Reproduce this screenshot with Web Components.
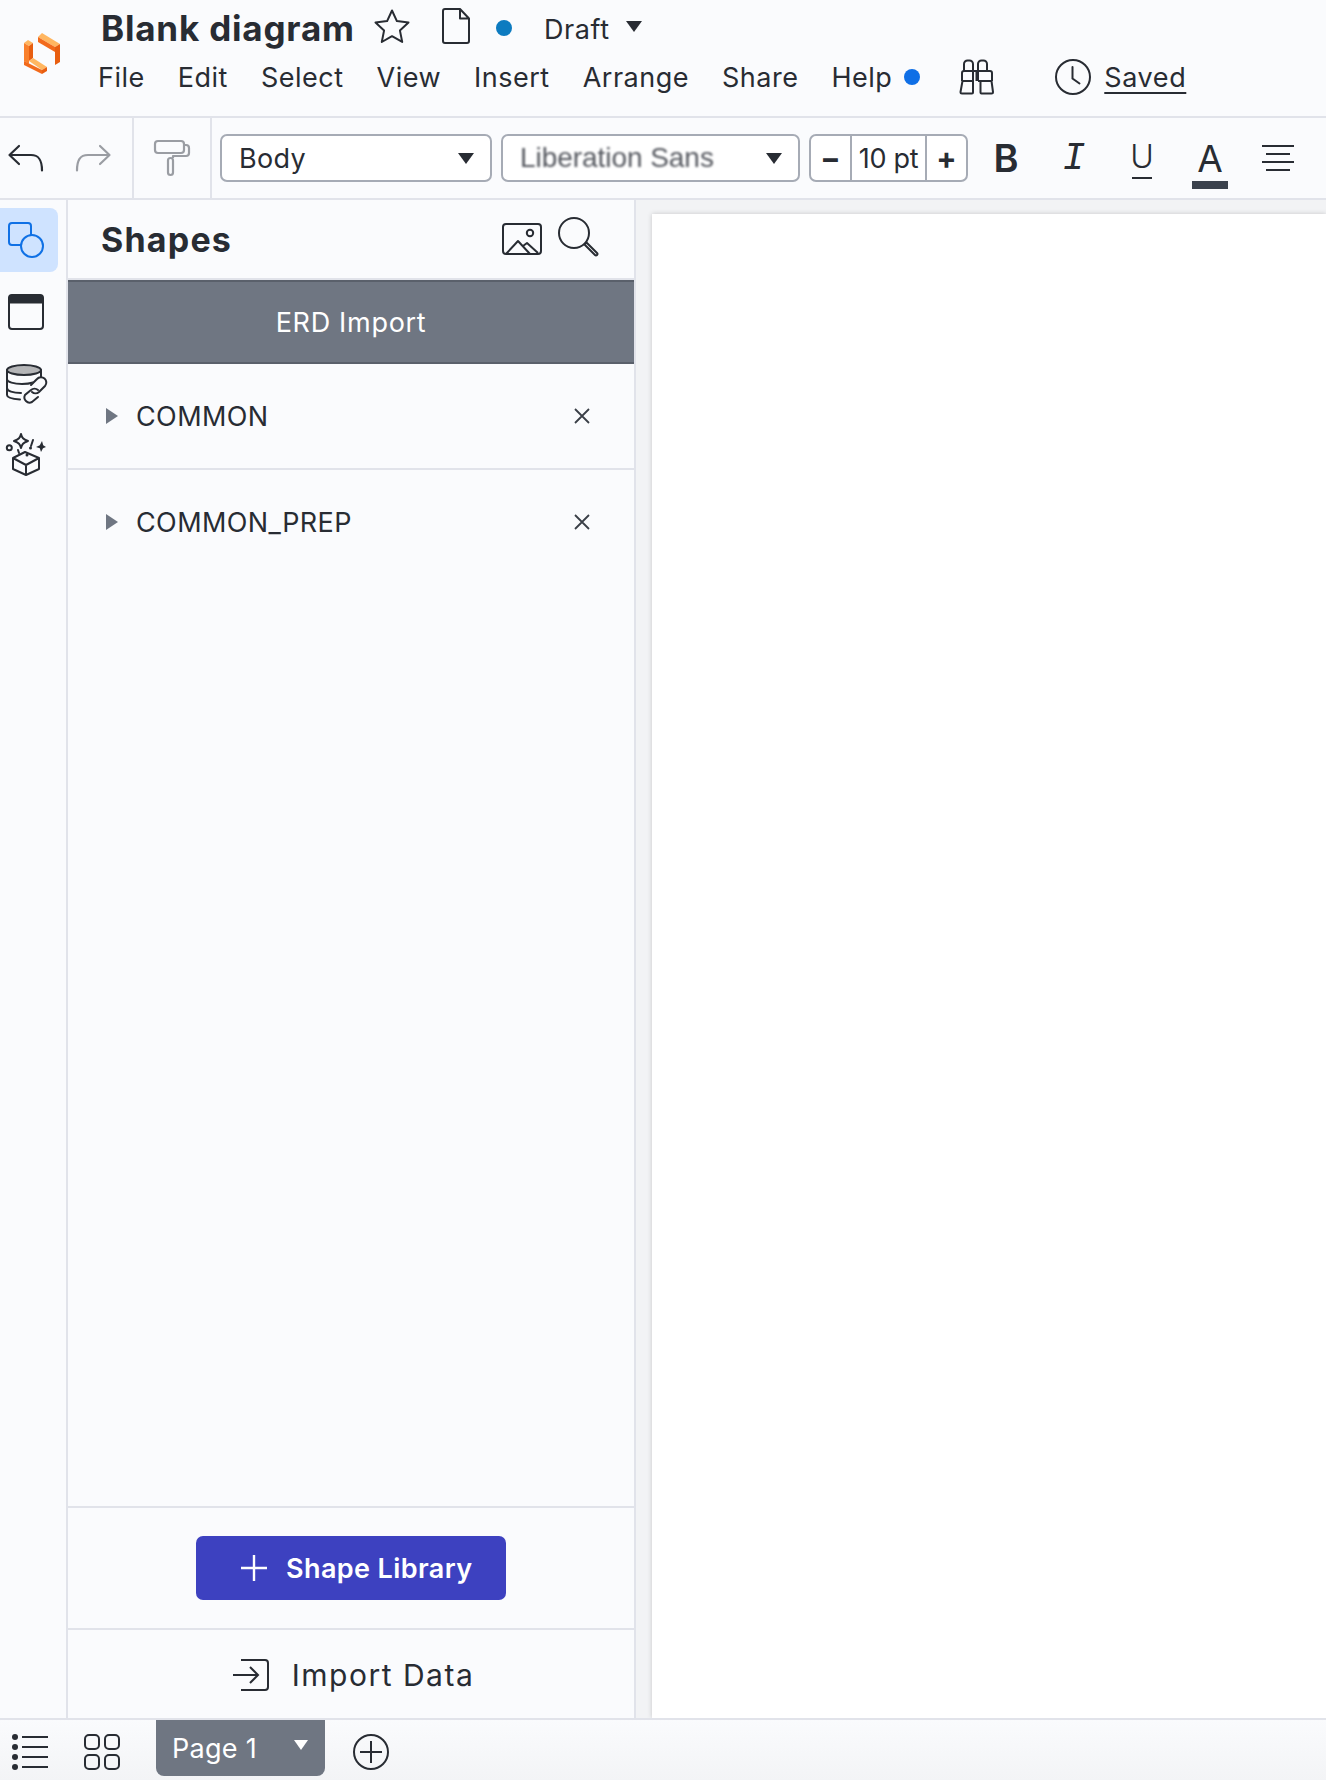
<!DOCTYPE html>
<html lang="en">
<head>
<meta charset="utf-8">
<title>Blank diagram</title>
<style>
  html, body { margin: 0; padding: 0; height: 100%; }
  body {
    display: flex;
    flex-direction: column;
    width: 1326px;
    height: 1780px;
    overflow: hidden;
    background: #fafbfd;
    color: #282c33;
    font-family: Inter, "Noto Sans", sans-serif;
  }
</style>
</head>
<body>
<lc-topbar></lc-topbar>
<lc-toolbar></lc-toolbar>
<lc-workspace>
  <lc-rail slot="rail"></lc-rail>
  <lc-panel slot="panel">
    <lc-library-row name="COMMON"></lc-library-row>
    <lc-library-row name="COMMON_PREP"></lc-library-row>
  </lc-panel>
  <lc-canvas slot="canvas"></lc-canvas>
</lc-workspace>
<lc-pagebar></lc-pagebar>

<script>
const ink = '#282c33';
const grey = '#9a9da3';

// every icon is [width, height, inner svg]
const ICONS = {
  logo: [36, 42, `
    <polygon points="14,5 18,1 36,12 31,15" fill="#ffb660"/>
    <polygon points="14,5 31,15 31,20 14,10" fill="#f26a1b"/>
    <polygon points="31,15 36,12 36,30 31,33" fill="#e85e10"/>
    <polygon points="0,11 4,8 9,11 5,14" fill="#ffb660"/>
    <polygon points="0,11 5,14 5,32 0,29" fill="#f9802c"/>
    <polygon points="5,14 9,11 9,26 5,29" fill="#e85e10"/>
    <polygon points="9,26 23,35 18,38 5,29" fill="#ffb660"/>
    <polygon points="0,29 18,38 18,42 0,33" fill="#f26a1b"/>
    <polygon points="18,38 23,35 23,39 18,42" fill="#e85e10"/>`],
  star: [36, 34, `<path d="M18 1.5l4.9 10.6 11.6 1.4-8.6 7.9 2.3 11.5L18 27.2 7.8 33l2.3-11.6-8.6-7.9 11.6-1.4z" fill="none" stroke="${ink}" stroke-width="2" stroke-linejoin="round"/>`],
  doc: [28, 36, `<path d="M3 1h15l9 9.500v22.500a2 2 0 0 1-2 2H3a2 2 0 0 1-2-2V3a2 2 0 0 1 2-2z M18 1v9.500h9" fill="none" stroke="${ink}" stroke-width="2" stroke-linejoin="round"/>`],
  binoculars: [36, 36, `<g fill="none" stroke="${ink}" stroke-width="2" stroke-linejoin="round">
    <path d="M5 12v-7a3.500 3.500 0 0 1 3.500-3.500h2a3.500 3.500 0 0 1 3.500 3.500v7M19 12v-7a3.500 3.500 0 0 1 3.500-3.500h2a3.500 3.500 0 0 1 3.500 3.500v7"/>
    <path d="M3 22V14a2 2 0 0 1 2-2h26a2 2 0 0 1 2 2v8M17.500 12v10M14 12v10M19 12v10M3 22h11M19 22h14"/>
    <path d="M3.500 22L1.500 33a1.500 1.500 0 0 0 1.500 1.500h10a1 1 0 0 0 1-1V22M21.500 22v11.500a1 1 0 0 0 1 1h10a1.500 1.500 0 0 0 1.500-1.500L32.500 22"/></g>`],
  clock: [36, 36, `<circle cx="18" cy="18" r="17" fill="none" stroke="${ink}" stroke-width="2"/><path d="M17.500 8v11.500l7 5" fill="none" stroke="${ink}" stroke-width="2" stroke-linecap="round"/>`],
  undo: [36, 28, `<path d="M11 2L1.500 11 11 20M2 11h21c8 0 11 5 11 15.500" fill="none" stroke="${ink}" stroke-width="2.200" stroke-linecap="round" stroke-linejoin="round"/>`],
  redo: [36, 28, `<path d="M25 2l9.500 9L25 20M34 11H13C5 11 2 16 2 26.500" fill="none" stroke="${grey}" stroke-width="2.200" stroke-linecap="round" stroke-linejoin="round"/>`],
  roller: [36, 36, `<g fill="none" stroke="${grey}" stroke-width="2.200" stroke-linejoin="round">
    <rect x="1" y="1" width="29" height="12" rx="3"/>
    <path d="M30 5h2a3 3 0 0 1 3 3v5a3 3 0 0 1-3 3H19v2"/>
    <rect x="14" y="18" width="5" height="17" rx="2.500"/></g>`],
  shapes: [36, 36, `<g fill="none" stroke="#1071e5" stroke-width="2">
    <path d="M13 23H4a3 3 0 0 1-3-3V4a3 3 0 0 1 3-3h16a3 3 0 0 1 3 3v9"/>
    <circle cx="24" cy="24" r="11"/></g>`],
  window: [36, 36, `<rect x="1" y="1" width="34" height="34" rx="3" fill="none" stroke="${ink}" stroke-width="2"/><path d="M1 9V4a3 3 0 0 1 3-3h28a3 3 0 0 1 3 3v5z" fill="${ink}" stroke="${ink}"/>`],
  dblink: [42, 40, `<g fill="none" stroke="${ink}" stroke-width="2" stroke-linecap="round">
    <ellipse cx="18" cy="6" rx="17" ry="5" fill="#b4b5b7"/>
    <path d="M1 6v25c0 2.500 6 4 13 4.500M35 6v9M1 15c0 3 7 5 15 5 5 0 8-.500 11-1.500M1 24c0 3 6 5 14 5"/>
    <rect x="14" y="19" width="30" height="14" rx="7" transform="rotate(-45 29 26)" fill="#fafbfd" stroke="none"/>
    <path d="M25 21l6-6a5.200 5.200 0 0 1 8 7l-6 6a5.200 5.200 0 0 1-7 0"/>
    <path d="M32 26a5.200 5.200 0 0 0-7 0l-6 5a5.200 5.200 0 0 0 7 7l6-5"/></g>`],
  gift: [40, 42, `<g fill="none" stroke="${ink}" stroke-width="2" stroke-linejoin="round">
    <path d="M7 24l12-6 14 6-13 7zM7 24v11l13 6 13-6V24M20 31v10"/>
    <circle cx="3.300" cy="13.700" r="2.500"/>
    <path d="M15 0c1 4 2 5 7 7-5 2-6 3-7 7-1-4-2-5-7-7 5-2 6-3 7-7z"/>
    <path d="M27 6l-2 6M12 16l1 3" stroke-linecap="round"/></g>
    <circle cx="24.500" cy="14" r="1.500" fill="${ink}"/>
    <circle cx="21" cy="21" r="1.500" fill="${ink}"/>
    <path d="M36 7l1.200 4.300 2.800 1.700-3 1.300L35 18l-1.200-3.700L30 13l3.800-1.700z" fill="${ink}"/>`],
  image: [40, 32, `<g fill="none" stroke="${ink}" stroke-width="2" stroke-linejoin="round">
    <rect x="1" y="1" width="38" height="30" rx="3"/>
    <circle cx="28" cy="10" r="3.200"/>
    <path d="M4 31l12-13 12 13M21 23l4-3 11 10"/></g>`],
  search: [40, 40, `<circle cx="16" cy="16" r="15" fill="none" stroke="${ink}" stroke-width="2"/>
    <path d="M26.500 27.500l2-2 10.500 10.500a1.400 1.400 0 0 1-2 2z" fill="none" stroke="${ink}" stroke-width="2" stroke-linejoin="round"/>`],
  close: [16, 16, `<path d="M1 1l14 14M15 1L1 15" fill="none" stroke="#3a3f47" stroke-width="1.800"/>`],
  plus: [28, 28, `<path d="M14 1v26M1 14h26" fill="none" stroke="#fff" stroke-width="2.400"/>`],
  importdata: [36, 32, `<path d="M8 1h24a3 3 0 0 1 3 3v24a3 3 0 0 1-3 3H8M0 16h24M17 8l8 8-8 8" fill="none" stroke="${ink}" stroke-width="2"/>`],
  list: [36, 36, `<g fill="${ink}"><circle cx="3" cy="3" r="3"/><circle cx="3" cy="13" r="3"/><circle cx="3" cy="23" r="3"/><circle cx="3" cy="33" r="3"/></g>
    <path d="M10 3h26M10 13h26M10 23h26M10 33h26" stroke="${ink}" stroke-width="2"/>`],
  grid: [36, 36, `<g fill="none" stroke="${ink}" stroke-width="2"><rect x="1" y="1" width="14" height="14" rx="4"/><rect x="21" y="1" width="14" height="14" rx="4"/><rect x="1" y="21" width="14" height="14" rx="4"/><rect x="21" y="21" width="14" height="14" rx="4"/></g>`],
  addpage: [36, 36, `<circle cx="18" cy="18" r="17" fill="none" stroke="${ink}" stroke-width="2"/><path d="M18 7v22M7 18h22" stroke="${ink}" stroke-width="2"/>`]
};

class LcIcon extends HTMLElement {
  constructor() {
    super();
    this.attachShadow({ mode: 'open' });
  }
  connectedCallback() {
    const [w, h, inner] = ICONS[this.getAttribute('name')];
    this.shadowRoot.innerHTML = `
      <style>:host { display: block; flex: none; line-height: 0; } svg { display: block; overflow: visible; }</style>
      <svg width="${w}" height="${h}" viewBox="0 0 ${w} ${h}">${inner}</svg>`;
  }
}
customElements.define('lc-icon', LcIcon);

class LcTopbar extends HTMLElement {
  constructor() {
    super();
    this.attachShadow({ mode: 'open' });
    this.shadowRoot.innerHTML = `
      <style>
        :host { display: flex; flex: none; height: 116px; border-bottom: 2px solid #e1e3ea; }
        .logo { width: 77px; padding: 32px 0 0 24px; flex: none; box-sizing: border-box; }
        .col { display: flex; flex-direction: column; }
        .title-row { display: flex; align-items: center; height: 52px; }
        h1 { margin: 4px 0 0 24px; font-size: 35px; font-weight: 700; letter-spacing: .8px; white-space: nowrap; width: 273px; }
        .doc { margin-left: 32px; }
        .dot { width: 16px; height: 16px; border-radius: 50%; background: #0c7bc0; margin: 4px 0 0 26px; }
        .draft { font-size: 27px; margin: 6px 0 0 32px; letter-spacing: .6px; width: 82px; }
        .caret { width: 0; height: 0; border-left: 8px solid transparent; border-right: 8px solid transparent; border-top: 11px solid ${ink}; margin-top: 0; }
        nav { display: flex; align-items: center; height: 50px; margin-left: 21px; font-size: 27px; letter-spacing: .5px; }
        nav span { margin-right: 33px; }
        nav .help { margin-right: 12px; }
        .blue { width: 16px; height: 16px; border-radius: 50%; background: #0f6fe6; margin-right: 39px; }
        .clock { margin-left: 60px; margin-right: 13px; }
        nav u { text-underline-offset: 5px; text-decoration-thickness: 2px; letter-spacing: .6px; }
      </style>
      <div class="logo"><lc-icon name="logo"></lc-icon></div>
      <div class="col">
        <div class="title-row">
          <h1>Blank diagram</h1>
          <lc-icon name="star"></lc-icon>
          <lc-icon class="doc" name="doc"></lc-icon>
          <div class="dot"></div>
          <div class="draft">Draft</div>
          <div class="caret"></div>
        </div>
        <nav>
          <span>File</span><span>Edit</span><span>Select</span><span>View</span><span>Insert</span><span>Arrange</span><span>Share</span><span class="help">Help</span>
          <div class="blue"></div>
          <lc-icon name="binoculars"></lc-icon>
          <lc-icon class="clock" name="clock"></lc-icon>
          <u>Saved</u>
        </nav>
      </div>`;
  }
}
customElements.define('lc-topbar', LcTopbar);

class LcSelect extends HTMLElement {
  constructor() {
    super();
    this.attachShadow({ mode: 'open' });
    this.shadowRoot.innerHTML = `
      <style>
        :host { display: flex; align-items: center; justify-content: space-between; box-sizing: border-box; height: 48px; padding: 0 16px 0 17px; border: 2px solid #a6abb5; border-radius: 7px; background: #fff; font-size: 27px; letter-spacing: .3px; }
        .caret { width: 0; height: 0; border-left: 8px solid transparent; border-right: 8px solid transparent; border-top: 11px solid ${ink}; }
      </style>
      <slot></slot><div class="caret"></div>`;
  }
}
customElements.define('lc-select', LcSelect);

class LcToolbar extends HTMLElement {
  constructor() {
    super();
    this.attachShadow({ mode: 'open' });
    this.shadowRoot.innerHTML = `
      <style>
        :host { display: flex; align-items: center; flex: none; height: 80px; border-bottom: 2px solid #e1e3ea; box-sizing: content-box; }
        .history { display: flex; align-items: center; gap: 31px; width: 134px; height: 100%; box-sizing: border-box; padding-left: 8px; border-right: 2px solid #e1e3ea; }
        .paint { display: flex; align-items: center; width: 78px; height: 100%; box-sizing: border-box; padding-left: 20px; border-right: 2px solid #e1e3ea; }
        .controls { display: flex; align-items: center; gap: 9px; margin-left: 8px; }
        .body { width: 272px; }
        .font { width: 299px; }
        .blurred { font-family: "Liberation Sans", sans-serif; color: #55585f; filter: blur(.9px); font-size: 28px; letter-spacing: -.05px; }
        .size { display: flex; align-items: stretch; width: 159px; height: 48px; box-sizing: border-box; border: 2px solid #a6abb5; border-radius: 7px; background: #fff; }
        .size div { display: flex; align-items: center; justify-content: center; }
        .step { width: 39px; font-size: 30px; font-weight: 700; }
        .val { flex: 1; border-left: 2px solid #a6abb5; border-right: 2px solid #a6abb5; font-size: 27px; letter-spacing: -.3px; }
        .fmt { display: flex; margin-left: 4px; }
        .fmt > div { position: relative; display: flex; align-items: center; justify-content: center; width: 68px; height: 60px; }
        .b { font-size: 38px; font-weight: 600; }
        .i { font-family: "Liberation Mono", monospace; font-style: italic; font-size: 38px; }
        .u { font-size: 32px; font-weight: 300; padding-bottom: 4px; box-sizing: border-box; }
        .a { font-size: 37px; font-weight: 400; box-sizing: border-box; }
        .u::after { content: ""; position: absolute; left: 24px; right: 24px; bottom: 9px; height: 2px; background: ${ink}; }
        .a::after { content: ""; position: absolute; left: 16px; right: 16px; bottom: -1px; height: 8px; background: #3b424d; }
        .lines { display: flex; flex-direction: column; align-items: center; gap: 6px; }
        .lines i { display: block; height: 2px; background: ${ink}; }
      </style>
      <div class="history"><lc-icon name="undo"></lc-icon><lc-icon name="redo"></lc-icon></div>
      <div class="paint"><lc-icon name="roller"></lc-icon></div>
      <div class="controls">
        <lc-select class="body">Body</lc-select>
        <lc-select class="font"><span class="blurred">Liberation Sans</span></lc-select>
        <div class="size"><div class="step">−</div><div class="val">10 pt</div><div class="step">+</div></div>
      </div>
      <div class="fmt">
        <div class="b">B</div>
        <div class="i">I</div>
        <div class="u">U</div>
        <div class="a">A</div>
        <div><span class="lines"><i style="width:32px"></i><i style="width:24px"></i><i style="width:32px"></i><i style="width:24px"></i></span></div>
      </div>`;
  }
}
customElements.define('lc-toolbar', LcToolbar);

class LcWorkspace extends HTMLElement {
  constructor() {
    super();
    this.attachShadow({ mode: 'open' });
    this.shadowRoot.innerHTML = `
      <style>:host { display: flex; flex: 1; min-height: 0; }</style>
      <slot name="rail"></slot><slot name="panel"></slot><slot name="canvas"></slot>`;
  }
}
customElements.define('lc-workspace', LcWorkspace);

class LcRail extends HTMLElement {
  constructor() {
    super();
    this.attachShadow({ mode: 'open' });
    this.shadowRoot.innerHTML = `
      <style>
        :host { display: flex; flex-direction: column; flex: none; width: 68px; box-sizing: border-box; border-right: 2px solid #e1e3ea; padding-top: 8px; }
        .item { display: flex; align-items: center; height: 64px; width: 58px; padding-left: 8px; box-sizing: border-box; margin-bottom: 8px; }
        .active { background: #cfe3ff; border-radius: 0 8px 8px 0; }
        .db { padding-left: 6px; margin-bottom: 7px; }
      </style>
      <div class="item active"><lc-icon name="shapes"></lc-icon></div>
      <div class="item"><lc-icon name="window"></lc-icon></div>
      <div class="item db"><lc-icon name="dblink"></lc-icon></div>
      <div class="item db"><lc-icon name="gift"></lc-icon></div>`;
  }
}
customElements.define('lc-rail', LcRail);

class LcLibraryRow extends HTMLElement {
  constructor() {
    super();
    this.attachShadow({ mode: 'open' });
    this.shadowRoot.innerHTML = `
      <style>
        :host { display: flex; align-items: center; height: 104px; padding: 0 44px 0 38px; }
        :host(:not(:last-child)) { border-bottom: 2px solid #e1e3ea; }
        .tri { width: 0; height: 0; border-top: 8px solid transparent; border-bottom: 8px solid transparent; border-left: 12px solid #6f7682; margin-right: 18px; }
        .name { flex: 1; font-size: 27px; letter-spacing: .4px; }
      </style>
      <div class="tri"></div><div class="name"></div><lc-icon name="close"></lc-icon>`;
  }
  connectedCallback() {
    this.shadowRoot.querySelector('.name').textContent = this.getAttribute('name');
  }
}
customElements.define('lc-library-row', LcLibraryRow);

class LcPanel extends HTMLElement {
  constructor() {
    super();
    this.attachShadow({ mode: 'open' });
    this.shadowRoot.innerHTML = `
      <style>
        :host { display: flex; flex-direction: column; flex: none; width: 568px; box-sizing: border-box; border-right: 2px solid #e1e3ea; }
        header { display: flex; align-items: center; flex: none; height: 78px; padding-left: 33px; padding-right: 36px; border-bottom: 2px solid #e1e3ea; }
        h2 { flex: 1; margin: 0; font-size: 34px; font-weight: 700; letter-spacing: 1.2px; }
        .search { margin-left: 16px; margin-top: -4px; }
        .import-bar { display: flex; align-items: center; justify-content: center; flex: none; box-sizing: border-box; height: 84px; background: #6f7682; border-top: 2px solid #5a606b; border-bottom: 2px solid #5a606b; color: #fff; font-size: 27px; letter-spacing: .7px; }
        .rows { flex: 1; display: flex; flex-direction: column; min-height: 0; }
        .lib { display: flex; align-items: center; justify-content: center; flex: none; height: 122px; border-top: 2px solid #e1e3ea; box-sizing: border-box; }
        button { display: flex; align-items: center; gap: 18px; width: 310px; height: 64px; padding: 0 0 0 44px; box-sizing: border-box; border: 0; border-radius: 7px; background: #3d41c0; color: #fff; font: 600 27px Inter, sans-serif; letter-spacing: .4px; }
        .data { display: flex; align-items: center; justify-content: center; gap: 23px; flex: none; height: 90px; box-sizing: border-box; padding: 2px 0 0 5px; border-top: 2px solid #e1e3ea; font-size: 30px; letter-spacing: 1.5px; }
      </style>
      <header><h2>Shapes</h2><lc-icon name="image"></lc-icon><lc-icon class="search" name="search"></lc-icon></header>
      <div class="import-bar">ERD Import</div>
      <div class="rows"><slot></slot></div>
      <div class="lib"><button><lc-icon name="plus"></lc-icon>Shape Library</button></div>
      <div class="data"><lc-icon name="importdata"></lc-icon>Import Data</div>`;
  }
}
customElements.define('lc-panel', LcPanel);

class LcCanvas extends HTMLElement {
  constructor() {
    super();
    this.attachShadow({ mode: 'open' });
    this.shadowRoot.innerHTML = `
      <style>
        :host { display: block; flex: 1; min-width: 0; box-sizing: border-box; padding: 14px 0 0 16px; background: #f2f3f5; }
        .sheet { height: 100%; background: #fff; box-shadow: 0 0 5px rgba(0,0,0,.18); }
      </style>
      <div class="sheet"></div>`;
  }
}
customElements.define('lc-canvas', LcCanvas);

class LcPagebar extends HTMLElement {
  constructor() {
    super();
    this.attachShadow({ mode: 'open' });
    this.shadowRoot.innerHTML = `
      <style>
        :host { display: flex; align-items: flex-start; flex: none; height: 60px; border-top: 2px solid #e1e3ea; background: linear-gradient(#fafbfd, #f3f4f6); position: relative; }
        .tool { margin-top: 14px; }
        .list { margin-left: 12px; }
        .grid { margin-left: 36px; }
        .tab { display: flex; align-items: center; width: 169px; height: 56px; margin-left: 36px; padding: 0 17px 0 16px; box-sizing: border-box; background: #6f7682; border-radius: 0 0 8px 8px; color: #fff; font-size: 27px; letter-spacing: .3px; }
        .tab span { flex: 1; }
        .caret { width: 0; height: 0; border-left: 7px solid transparent; border-right: 7px solid transparent; border-top: 10px solid #fff; margin-bottom: 6px; }
        .add { margin-left: 28px; }
      </style>
      <lc-icon class="tool list" name="list"></lc-icon>
      <lc-icon class="tool grid" name="grid"></lc-icon>
      <div class="tab"><span>Page 1</span><div class="caret"></div></div>
      <lc-icon class="tool add" name="addpage"></lc-icon>`;
  }
}
customElements.define('lc-pagebar', LcPagebar);
</script>
</body>
</html>
